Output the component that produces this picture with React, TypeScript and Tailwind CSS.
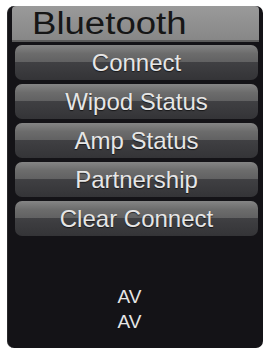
import React from "react";

const items = ["Connect", "Wipod Status", "Amp Status", "Partnership", "Clear Connect"];

export default function App() {
  return (
    <div className="w-[265px] h-[353px] bg-white pt-[6px] pl-[7px] pr-[2px] pb-[5px]" style={{ fontFamily: '"Liberation Sans", Arial, sans-serif' }}>
      <div className="h-[342px] rounded-[7px] bg-[#141317] flex flex-col border-l-[1px] border-[#2a2a2c]">
        <div className="mx-[4px] h-[36px] rounded-t-[4px] bg-gradient-to-b from-[#9a9a9a] to-[#878787] border-b-[2px] border-[#5c5c5c] flex items-center pl-[20px]">
          <span className="inline-block origin-left scale-x-[1.18] text-[31px] leading-none text-[#161616]">Bluetooth</span>
        </div>
        <div className="mt-[3px] ml-[7px] mr-[5px] flex flex-col gap-[4px]">
          {items.map((t) => (
            <div key={t} className="relative h-[35px] rounded-[7px] overflow-hidden flex flex-col">
              <div className="h-[17px] bg-gradient-to-b from-[#858585] via-[#6c6c6c] to-[#616162]" />
              <div className="flex-1 bg-gradient-to-b from-[#404043] to-[#343437]" />
              <div className="absolute inset-0 flex items-center justify-center text-[24px] leading-none text-[#e6e6e6] [text-shadow:0_1px_1px_rgba(0,0,0,0.6)]">
                {t}
              </div>
            </div>
          ))}
        </div>
        <div className="mt-[48px] pr-[12px] flex flex-col items-center text-[19px] leading-[25px] text-[#e6e6e6]">
          <span>AV</span>
          <span>AV</span>
        </div>
      </div>
    </div>
  );
}
